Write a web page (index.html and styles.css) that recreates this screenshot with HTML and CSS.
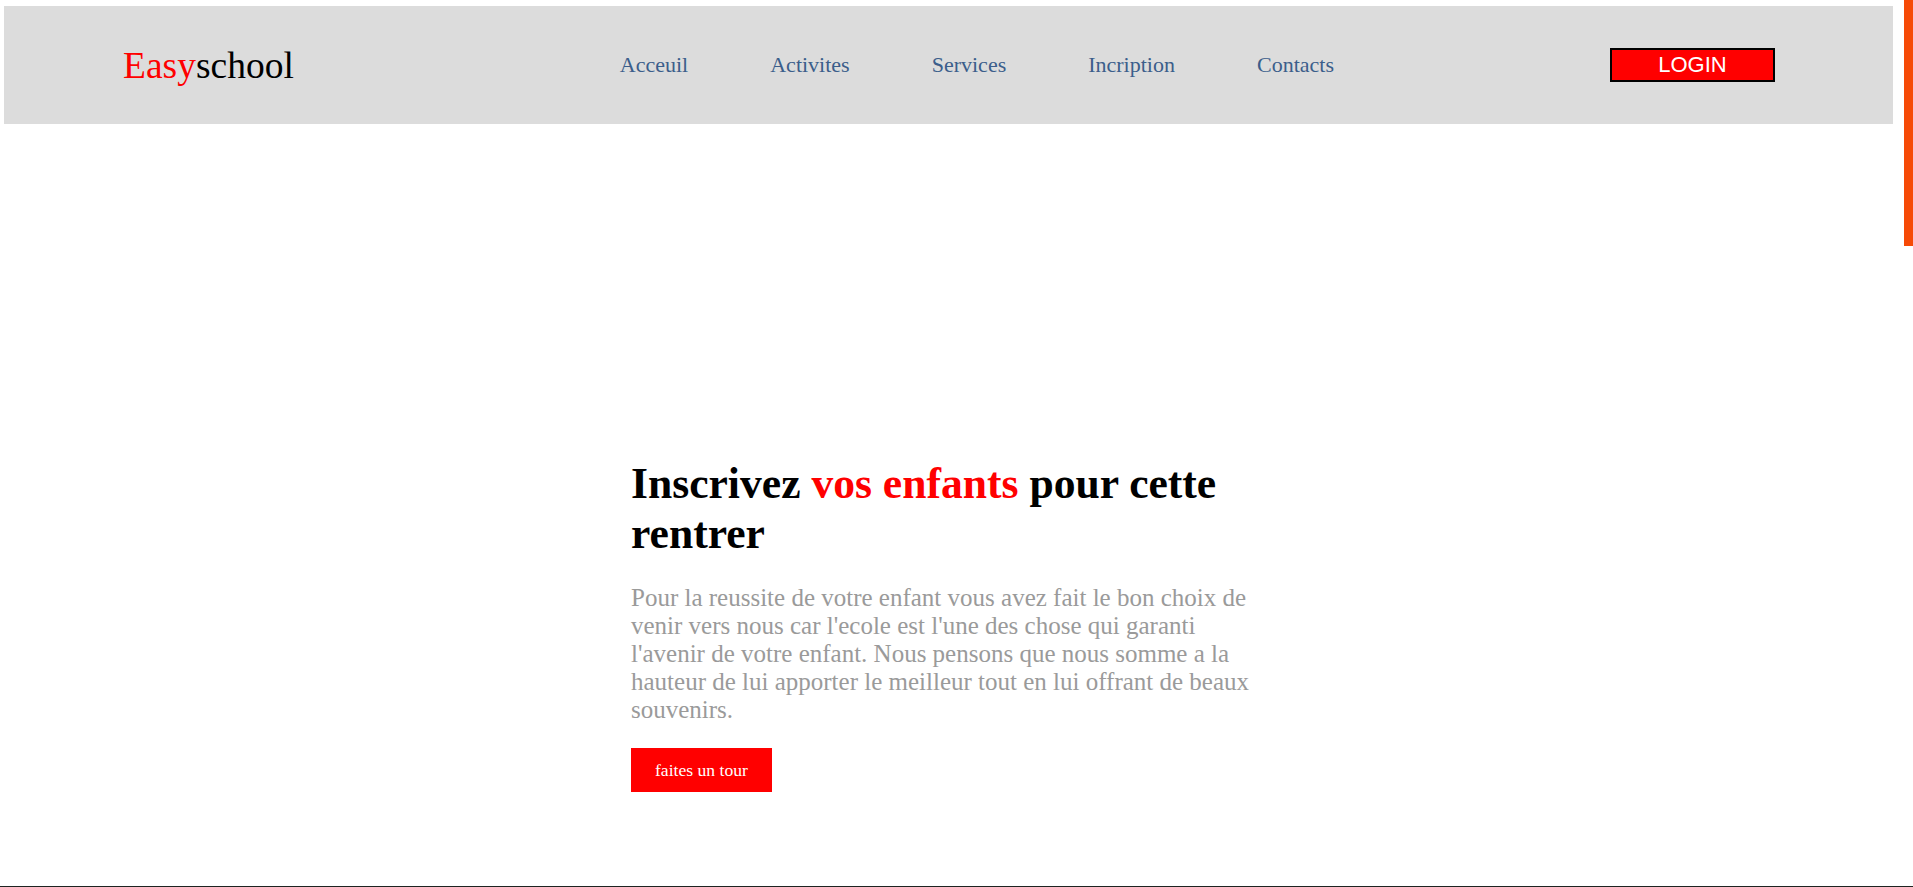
FILE: index.html
```html
<!DOCTYPE html>
<html lang="fr">
<head>
<meta charset="utf-8">
<title>Easyschool</title>
<link rel="stylesheet" href="styles.css">
</head>
<body>
  <header class="topbar">
    <div class="logo"><span class="logo-red">Easy</span>school</div>
    <nav class="menu">
      <a href="#" class="menu-link">Acceuil</a>
      <a href="#" class="menu-link">Activites</a>
      <a href="#" class="menu-link">Services</a>
      <a href="#" class="menu-link">Incription</a>
      <a href="#" class="menu-link">Contacts</a>
    </nav>
    <a href="#" class="login">LOGIN</a>
  </header>

  <section class="hero">
    <div class="hero-content">
      <h1 class="hero-title">Inscrivez <span class="red">vos enfants</span> pour cette rentrer</h1>
      <p class="hero-text">Pour la reussite de votre enfant vous avez fait le bon choix de venir vers nous car l'ecole est l'une des chose qui garanti l'avenir de votre enfant. Nous pensons que nous somme a la hauteur de lui apporter le meilleur tout en lui offrant de beaux souvenirs.</p>
      <a href="#" class="tour-btn">faites un tour</a>
    </div>
  </section>

  <section class="next-section"></section>

  <div class="scroll-thumb"></div>
</body>
</html>
```

FILE: styles.css
```css
body {
  margin: 0;
  font-family: "Liberation Serif", "Times New Roman", serif;
  background: #ffffff;
}

.topbar {
  display: flex;
  align-items: center;
  height: 118px;
  margin: 6px 20px 0 4px;
  padding: 0 118px 0 119px;
  background: #dcdcdc;
}

.logo {
  font-size: 37.5px;
  color: #000000;
}

.logo-red {
  color: #ff0000;
}

.menu {
  display: flex;
  gap: 82px;
  margin-left: 326px;
}

.menu-link {
  font-size: 22px;
  color: #3b5e8b;
  text-decoration: none;
}

.login {
  margin-left: auto;
  box-sizing: border-box;
  width: 165px;
  height: 34px;
  display: flex;
  align-items: center;
  justify-content: center;
  background: #ff0000;
  border: 2px solid #000000;
  color: #ffffff;
  font-family: "Liberation Sans", Arial, sans-serif;
  font-size: 22px;
  text-decoration: none;
}

.hero {
  box-sizing: border-box;
  height: 762px;
  padding-top: 334px;
}

.hero-content {
  width: 625px;
  margin-left: 631px;
}

.hero-title {
  margin: 0 0 26px;
  font-size: 43.6px;
  font-weight: bold;
  color: #000000;
}

.red {
  color: #ff0000;
}

.hero-text {
  margin: 0 0 24px;
  font-size: 25px;
  color: #9a9a9a;
}

.tour-btn {
  display: inline-flex;
  align-items: center;
  height: 44px;
  padding: 0 24px;
  background: #ff0000;
  color: #ffffff;
  font-size: 17.6px;
  text-decoration: none;
}

.next-section {
  height: 2312px;
  background: #1e2421;
}

.scroll-thumb {
  position: fixed;
  top: 0;
  right: 0;
  width: 9px;
  height: 246px;
  background: #f64a06;
}
```
